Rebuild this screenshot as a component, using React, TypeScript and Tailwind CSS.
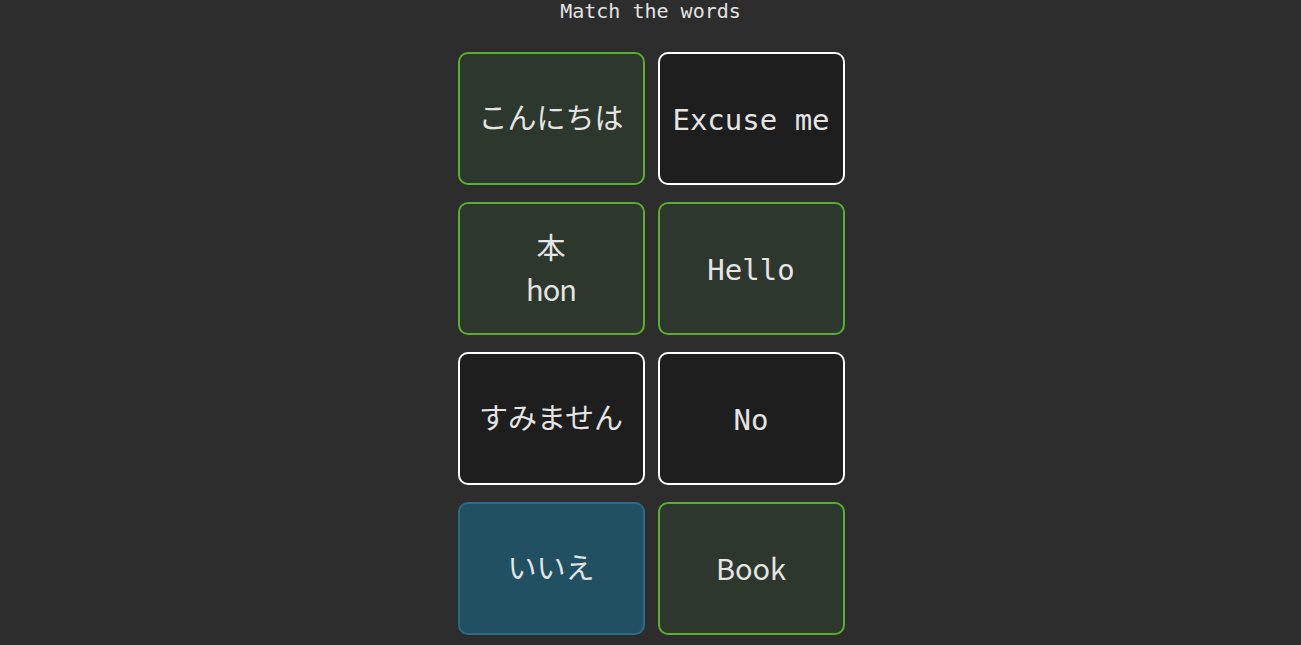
const mono = "font-['DejaVu_Sans_Mono','Noto_Sans_CJK_JP',monospace]";
const cjk = "font-['Noto_Sans_CJK_JP',sans-serif]";

type Tone = "green" | "white" | "blue";

const tones: Record<Tone, string> = {
  green: "border-[#5bad2c] bg-[#2e372d]",
  white: "border-white bg-[#1e1e1e]",
  blue: "border-[#2a6b8c] bg-[#215062]",
};

function Card({ tone, children }: { tone: Tone; children: React.ReactNode }) {
  return (
    <div
      className={`${tones[tone]} border-2 rounded-[10px] h-[133px] pt-[4px] flex flex-col items-center justify-center text-[29px] text-[#e4e4e4] ${mono}`}
    >
      {children}
    </div>
  );
}

// kana sit a touch higher than the latin words
function Jp({ children }: { children: React.ReactNode }) {
  return <span className="-mt-[2px]">{children}</span>;
}

export default function App() {
  return (
    <div className="min-h-screen bg-[#2d2d2d] flex flex-col items-center">
      <p className={`${mono} text-[20px] leading-[23px] text-[#e4e4e4]`}>Match the words</p>
      <div className="mt-[29px] grid grid-cols-[187px_187px] gap-x-[13px] gap-y-[17px] ml-[1px]">
        <Card tone="green">
          <Jp>こんにちは</Jp>
        </Card>
        <Card tone="white">Excuse me</Card>
        <Card tone="green">
          <span className={`${cjk} leading-[42px] -mt-[8px]`}>本</span>
          <span className={`${cjk} leading-[42px] tracking-[-1px]`}>hon</span>
        </Card>
        <Card tone="green">Hello</Card>
        <Card tone="white">
          <Jp>すみません</Jp>
        </Card>
        <Card tone="white">No</Card>
        <Card tone="blue">
          <Jp>いいえ</Jp>
        </Card>
        <Card tone="green">
          <span className={`${cjk} -mt-[6px]`}>Book</span>
        </Card>
      </div>
    </div>
  );
}
